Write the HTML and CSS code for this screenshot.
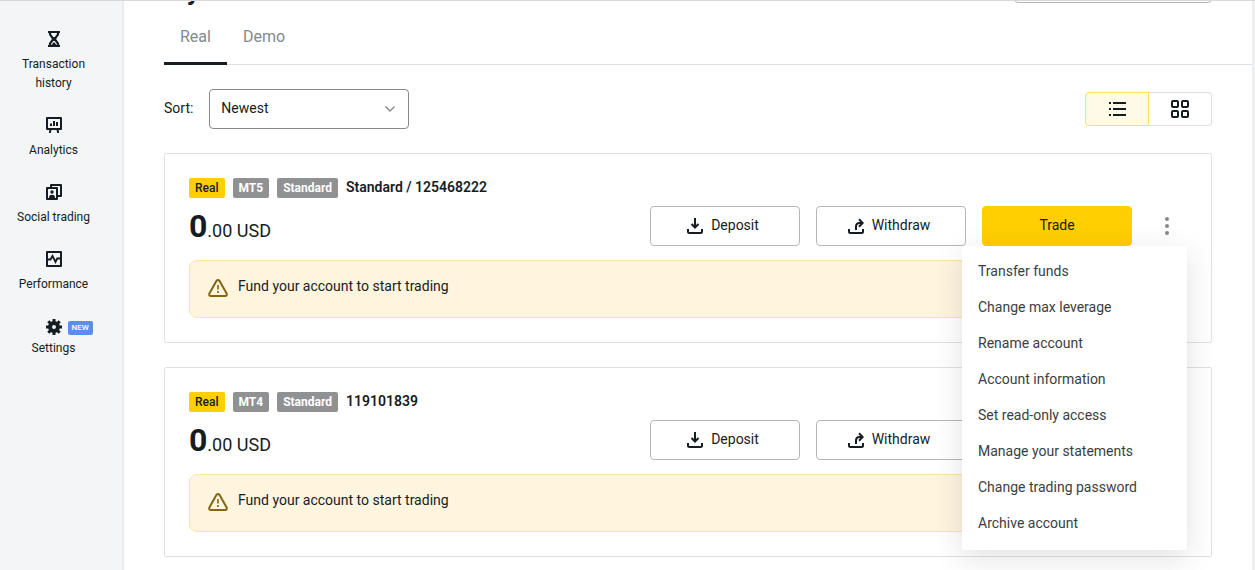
FILE: index.html
```
<!DOCTYPE html>
<html lang="en">
<head>
  <meta charset="UTF-8">
  <meta name="viewport" content="width=device-width, initial-scale=1.0">
  <title>My accounts</title>
  <link rel="stylesheet" href="styles.css">
</head>
<body>

  <!-- Shared icons -->
  <svg class="sprite" aria-hidden="true">
    <symbol id="icon-deposit" viewBox="0 0 16 16">
      <path d="M8 0v9.500M4.500 6L8 9.500 11.500 6M1 11v2.500q0 1.500 1.500 1.500h11q1.500 0 1.500-1.500V11" fill="none" stroke="currentColor" stroke-width="2"/>
    </symbol>
    <symbol id="icon-withdraw" viewBox="0 0 16 16">
      <path d="M8 12V8.500Q8 5 11.500 5H14M11 1.300L14.700 5 11 8.700M1 11v2.500q0 1.500 1.500 1.500h11q1.500 0 1.500-1.500V11" fill="none" stroke="currentColor" stroke-width="2"/>
    </symbol>
    <symbol id="icon-warning" viewBox="0 0 20 18">
      <path d="M8.400 2L1.500 14.200Q.4 17 3 17h14q2.600 0 1.500-2.800L11.600 2Q10 .2 8.400 2z" fill="none" stroke="currentColor" stroke-width="2" stroke-linejoin="round"/>
      <path d="M10 6v4.500M10 12v2" fill="none" stroke="currentColor" stroke-width="1.600"/>
    </symbol>
    <symbol id="icon-more" viewBox="0 0 4 18">
      <circle cx="2" cy="2" r="2"/><circle cx="2" cy="9" r="2"/><circle cx="2" cy="16" r="2"/>
    </symbol>
  </svg>

  <div class="app">
    <nav class="sidebar">
      <a class="nav-item" href="#history">
        <svg width="16" height="16" viewBox="0 0 16 16" fill="none" stroke="currentColor" stroke-width="2">
          <path d="M2 1h12M2 15h12"/>
          <path d="M4 1v2.500L7.300 8 4 12.500V15M12 1v2.500L8.700 8 12 12.500V15" stroke-width="2.200"/>
          <path d="M5 14.500L8 11l3 3.500z" fill="currentColor" stroke="none"/>
          <path d="M6 6h4v4H6z" fill="currentColor" stroke="none"/>
        </svg>
        <span>Transaction history</span>
      </a>
      <a class="nav-item" href="#analytics">
        <svg width="16" height="16" viewBox="0 0 16 16" fill="none" stroke="currentColor" stroke-width="2">
          <path d="M1 1h14v11H1z" stroke-linejoin="round"/>
          <path d="M4.500 12.500L3.800 16M11.500 12.500l.7 3.500"/>
          <path d="M5 6.500V9M8 4V9M11 5V9" stroke-width="2"/>
        </svg>
        <span>Analytics</span>
      </a>
      <a class="nav-item" href="#social">
        <svg width="16" height="16" viewBox="0 0 16 16" fill="none" stroke="currentColor" stroke-width="2">
          <path d="M1 4h10v11H1z" stroke-linejoin="round"/>
          <path d="M5 4V1h10v11h-4" stroke-linejoin="round"/>
          <circle cx="6" cy="8" r="1.700" fill="currentColor" stroke="none"/>
          <path d="M3 14q0-3.300 3-3.300T9 14z" fill="currentColor" stroke="none"/>
        </svg>
        <span>Social trading</span>
      </a>
      <a class="nav-item" href="#performance">
        <svg width="16" height="16" viewBox="0 0 16 16" fill="none" stroke="currentColor" stroke-width="2">
          <path d="M1 1h14v14H1z" stroke-linejoin="round"/>
          <path d="M1 8.500h3.500L6.500 5l3 6 1.700-3.500H15" stroke-width="1.800"/>
        </svg>
        <span>Performance</span>
      </a>
      <a class="nav-item nav-settings" href="#settings">
        <span class="nav-icon">
          <svg width="16" height="16" viewBox="0 0 16 16" fill="none" stroke="currentColor">
            <circle cx="8" cy="8" r="4" stroke-width="4"/>
            <path d="M8 0v3M8 13v3M0 8h3M13 8h3M2.300 2.300l2.200 2.200M11.500 11.500l2.200 2.200M13.700 2.300l-2.200 2.200M4.500 11.500l-2.200 2.200" stroke-width="3"/>
          </svg>
          <span class="badge-new">NEW</span>
        </span>
        <span>Settings</span>
      </a>
    </nav>

    <main class="main">
      <div class="page-head">
        <h1>My accounts</h1>
        <button class="open-account" type="button" aria-label="Open account"></button>
      </div>

      <div class="tabs">
        <button class="tab active" type="button">Real</button>
        <button class="tab" type="button">Demo</button>
      </div>

      <div class="content">
        <div class="toolbar">
          <label for="sort">Sort:</label>
          <div class="select-box">
            <select id="sort">
              <option>Newest</option>
            </select>
            <svg width="10" height="6" viewBox="0 0 10 6" fill="none" stroke="currentColor" stroke-width="1.400">
              <path d="M.5.500L5 5 9.500.500"/>
            </svg>
          </div>
          <div class="view-switch">
            <button class="view-btn active" type="button" aria-label="List view">
              <svg width="18" height="14" viewBox="0 0 18 14" fill="none" stroke="currentColor" stroke-width="2">
                <path d="M1 1h2M5 1h13M1 7h2M5 7h13M1 13h2M5 13h13"/>
              </svg>
            </button>
            <button class="view-btn" type="button" aria-label="Grid view">
              <svg width="18" height="18" viewBox="0 0 18 18" fill="none" stroke="currentColor" stroke-width="2">
                <rect x="1" y="1" width="6" height="6" rx="1"/>
                <rect x="11" y="1" width="6" height="6" rx="1"/>
                <rect x="1" y="11" width="6" height="6" rx="1"/>
                <rect x="11" y="11" width="6" height="6" rx="1"/>
              </svg>
            </button>
          </div>
        </div>

        <section class="card">
          <div class="card-title">
            <span class="tag tag-real">Real</span>
            <span class="tag">MT5</span>
            <span class="tag">Standard</span>
            <h2>Standard / 125468222</h2>
          </div>
          <div class="card-row">
            <p class="balance"><strong>0</strong>.00 USD</p>
            <div class="actions">
              <button class="btn" type="button"><svg width="16" height="16"><use href="#icon-deposit"/></svg>Deposit</button>
              <button class="btn" type="button"><svg width="16" height="16"><use href="#icon-withdraw"/></svg>Withdraw</button>
              <button class="btn btn-trade" type="button">Trade</button>
              <div class="more">
                <button class="more-btn" type="button" aria-label="More actions"><svg width="4" height="18"><use href="#icon-more"/></svg></button>
                <div class="menu">
                  <button type="button">Transfer funds</button>
                  <button type="button">Change max leverage</button>
                  <button type="button">Rename account</button>
                  <button type="button">Account information</button>
                  <button type="button">Set read-only access</button>
                  <button type="button">Manage your statements</button>
                  <button type="button">Change trading password</button>
                  <button type="button">Archive account</button>
                </div>
              </div>
            </div>
          </div>
          <div class="notice">
            <svg width="20" height="18"><use href="#icon-warning"/></svg>
            <p>Fund your account to start trading</p>
          </div>
        </section>

        <section class="card">
          <div class="card-title">
            <span class="tag tag-real">Real</span>
            <span class="tag">MT4</span>
            <span class="tag">Standard</span>
            <h2>119101839</h2>
          </div>
          <div class="card-row">
            <p class="balance"><strong>0</strong>.00 USD</p>
            <div class="actions">
              <button class="btn" type="button"><svg width="16" height="16"><use href="#icon-deposit"/></svg>Deposit</button>
              <button class="btn" type="button"><svg width="16" height="16"><use href="#icon-withdraw"/></svg>Withdraw</button>
              <button class="btn btn-trade" type="button" aria-label="Trade"></button>
              <div class="more">
                <button class="more-btn" type="button" aria-label="More actions"><svg width="4" height="18"><use href="#icon-more"/></svg></button>
              </div>
            </div>
          </div>
          <div class="notice">
            <svg width="20" height="18"><use href="#icon-warning"/></svg>
            <p>Fund your account to start trading</p>
          </div>
        </section>
      </div>
    </main>
  </div>

</body>
</html>
```
FILE: styles.css
```
* {
  box-sizing: border-box;
}

body {
  margin: 0;
  font-family: Roboto, Arial, sans-serif;
  font-size: 14px;
  line-height: 20px;
  color: #141d22;
  background-color: #fff;
}

h1, h2, p {
  margin: 0;
}

button, select {
  font: inherit;
  color: inherit;
  cursor: pointer;
}

svg {
  flex-shrink: 0;
}

.sprite {
  display: none;
}

.app {
  display: flex;
  min-height: 100vh;
  border-top: 1px solid #d8d8d8;
}

/* Sidebar */
.sidebar {
  width: 124px;
  flex-shrink: 0;
  padding: 30px 15px 0 0;
  background-color: #f3f5f7;
  border-right: 2px solid #e9ebed;
  display: flex;
  flex-direction: column;
  gap: 24px;
}

.nav-item {
  display: flex;
  flex-direction: column;
  align-items: center;
  gap: 8px;
  padding: 0 16px;
  font-size: 12px;
  line-height: 19px;
  text-align: center;
  color: #141d22;
  text-decoration: none;
}

.nav-settings {
  gap: 4px;
  padding-top: 1px;
}

.nav-icon {
  position: relative;
  display: flex;
}

.badge-new {
  position: absolute;
  left: 22px;
  top: 2px;
  padding: 0 4px;
  border-radius: 2px;
  background-color: #5c8ee6;
  color: #fff;
  font-size: 8px;
  font-weight: 500;
  line-height: 14px;
}

/* Main area */
.main {
  flex: 1;
  min-width: 0;
  padding-left: 40px;
  border-right: 3px solid #eceef0;
}

.page-head {
  display: flex;
  justify-content: space-between;
  align-items: flex-end;
  height: 5px;
  margin-right: 40px;
  overflow: hidden;
}

.page-head h1 {
  font-size: 26px;
  line-height: 30px;
}

.open-account {
  width: 198px;
  height: 40px;
  margin-bottom: 3px;
  border: 1px solid #b4b7b9;
  border-radius: 4px;
  background-color: #fff;
}

.tabs {
  display: flex;
  border-bottom: 1px solid #dfe1e3;
}

.tab {
  padding: 19px 16px 13px;
  margin-bottom: -1px;
  border: none;
  border-bottom: 3px solid transparent;
  background: none;
  font-size: 16px;
  line-height: 24px;
  color: #85898c;
}

.tab.active {
  border-bottom-color: #141d22;
}

.content {
  padding: 24px 40px 0 0;
}

.toolbar {
  display: flex;
  align-items: center;
}

.toolbar label {
  padding-bottom: 2px;
}

.select-box {
  position: relative;
  width: 200px;
  margin-left: 16px;
}

.select-box select {
  display: block;
  width: 100%;
  height: 40px;
  padding: 0 11px 2px;
  border: 1px solid #85898c;
  border-radius: 4px;
  background-color: #fff;
  appearance: none;
}

.select-box svg {
  position: absolute;
  right: 14px;
  top: 17px;
  color: #85898c;
  pointer-events: none;
}

.view-switch {
  display: flex;
  margin-left: auto;
}

.view-btn {
  display: flex;
  align-items: center;
  justify-content: center;
  width: 63px;
  height: 34px;
  padding: 0;
  border: 1px solid #dfe1e3;
  border-left: none;
  border-radius: 0 4px 4px 0;
  background-color: #fff;
}

.view-btn.active {
  width: 64px;
  border: 1px solid #fbdf6b;
  border-radius: 4px 0 0 4px;
  background-color: #fffbe7;
}

/* Account cards */
.card {
  margin-top: 24px;
  padding: 24px;
  border: 1px solid #dfe1e3;
  border-radius: 2px;
}

.card-title {
  display: flex;
  gap: 8px;
}

.card-title h2 {
  font-size: 14px;
  font-weight: 600;
  line-height: 18px;
}

.tag {
  padding: 0 6px;
  border-radius: 2px;
  background-color: #8f9193;
  color: #fff;
  font-size: 12px;
  font-weight: 700;
  line-height: 20px;
}

.tag-real {
  background-color: #ffcf01;
  color: #141d22;
  font-weight: 500;
}

.card-row {
  display: flex;
  justify-content: space-between;
  margin-top: 8px;
}

.balance {
  display: flex;
  align-items: baseline;
  height: 40px;
  font-size: 18px;
  line-height: 24px;
}

.balance strong {
  font-size: 32px;
  line-height: 40px;
}

.actions {
  display: flex;
  gap: 16px;
}

.btn {
  display: flex;
  align-items: center;
  justify-content: center;
  gap: 8px;
  width: 150px;
  height: 40px;
  padding: 0 4px 2px 0;
  border: 1px solid #b4b7b9;
  border-radius: 4px;
  background-color: #fff;
}

.btn svg {
  margin-top: 2px;
}

.btn-trade {
  padding-right: 0;
  border-color: #ffcf01;
  background-color: #ffcf01;
}

.more {
  position: relative;
}

.more-btn {
  display: flex;
  align-items: center;
  justify-content: center;
  width: 39px;
  height: 40px;
  padding: 0 2px 0 0;
  border: none;
  background: none;
  fill: #85898c;
}

.menu {
  position: absolute;
  top: 100%;
  right: 0;
  z-index: 1;
  width: 225px;
  padding: 8px 0;
  border-radius: 2px;
  background-color: #fff;
  box-shadow: 0 8px 32px rgba(0, 0, 0, 0.12);
}

.menu button {
  display: block;
  width: 100%;
  padding: 7px 16px 9px;
  border: none;
  background: none;
  color: #3a3e41;
  text-align: left;
}

.notice {
  display: flex;
  gap: 10px;
  margin-top: 14px;
  padding: 15px 18px 20px;
  border: 1px solid #fae6a8;
  border-radius: 8px;
  background-color: #fff4de;
}

.notice svg {
  margin-top: 3px;
  color: #846515;
}
```
